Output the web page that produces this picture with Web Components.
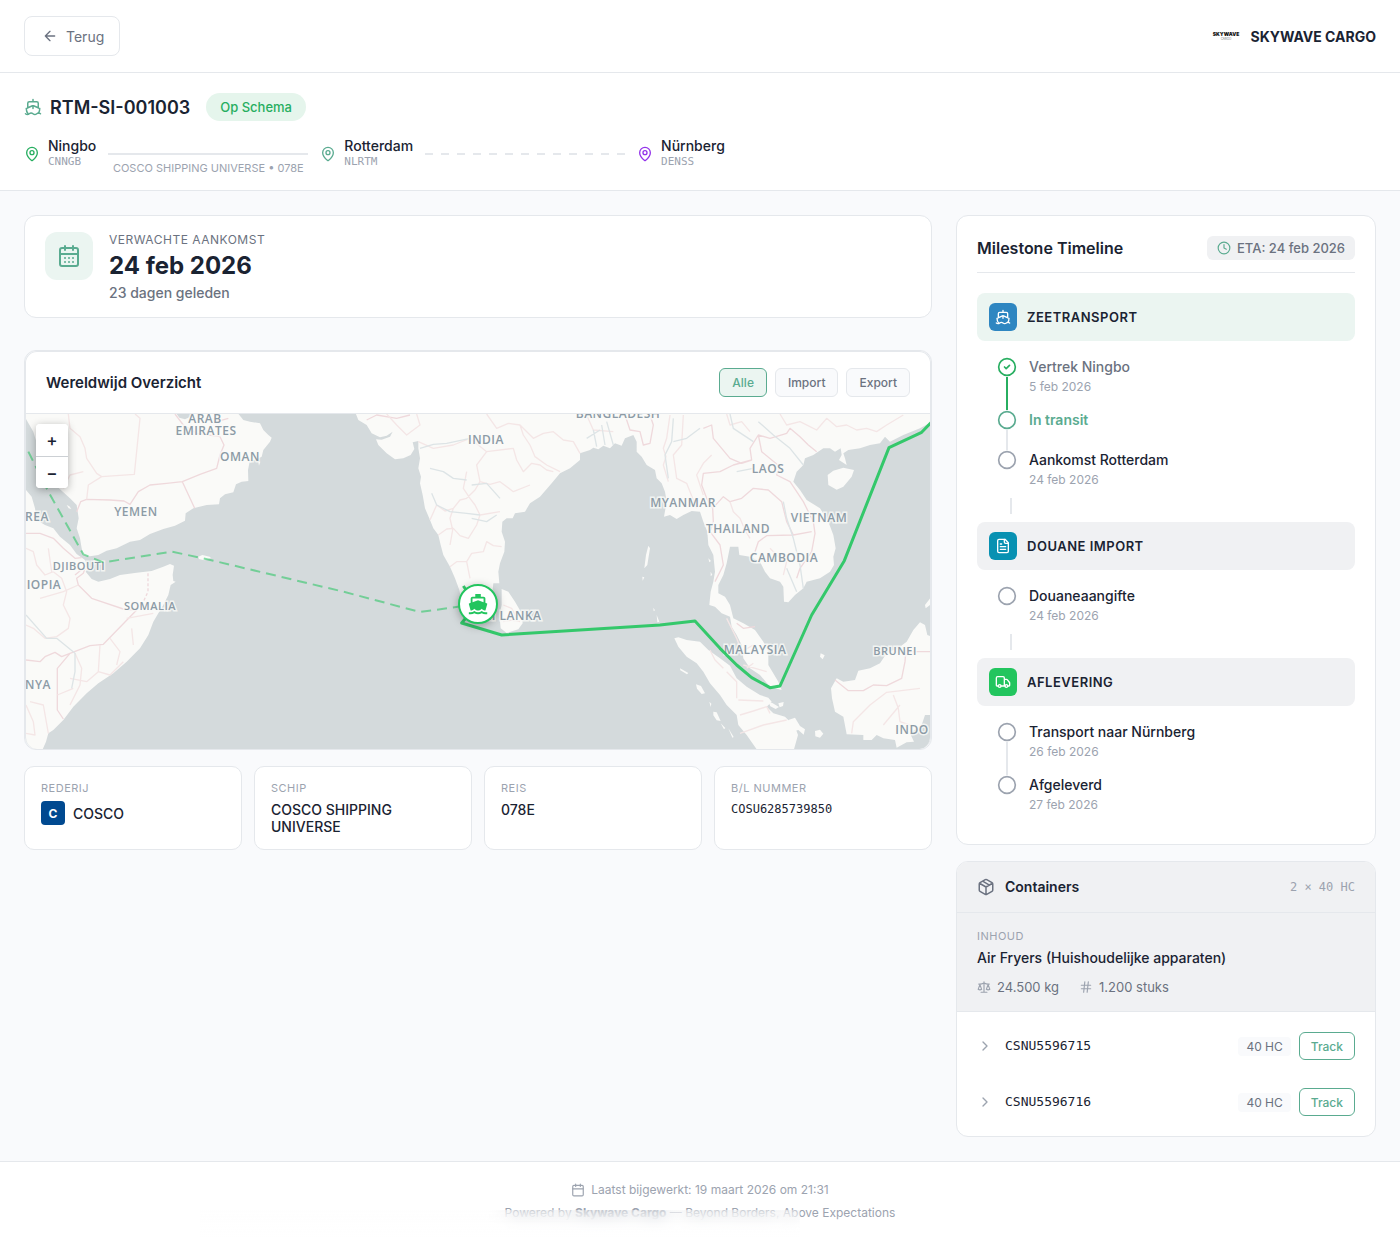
<!DOCTYPE html>
<html lang="nl">
<head>
<meta charset="utf-8">
<meta name="viewport" content="width=device-width, initial-scale=1">
<title>RTM-SI-001003</title>
<style>
:root {
  --ink: #1a2332; --muted: #6b7280; --faint: #9ca3af; --line: #e5e8ec;
  --brand: #5aab90; --tint: #ebf5f1; --ok: #27ae60; --page: #f9fafc; --soft: #f0f1f3;
  --mono: "DejaVu Sans Mono", monospace;
}
body { margin: 0; background: var(--page); color: var(--ink); font: 14px/17px Inter, sans-serif; }
</style>
</head>
<body>
<tracking-page></tracking-page>
<script>
const define = (name, html, extra = {}) => {
  const tpl = document.createElement('template');
  tpl.innerHTML = html;
  customElements.define(name, class extends HTMLElement {
    connectedCallback() {
      if (this.shadowRoot) return;
      this.attachShadow({ mode: 'open' }).append(tpl.content.cloneNode(true));
      if (extra.ready) extra.ready(this, this.shadowRoot);
    }
  });
};

/* Icon set on a 24px grid */
const ICONS = {
  back: '<path d="m12 19-7-7 7-7M19 12H5"/>',
  ship: '<path d="M12 10.189V14M12 2v3M19 13V7a2 2 0 0 0-2-2H7a2 2 0 0 0-2 2v6M19.38 20A11.6 11.6 0 0 0 21 14l-8.188-3.639a2 2 0 0 0-1.624 0L3 14a11.6 11.6 0 0 0 2.81 7.76"/><path d="M2 21c.6.5 1.2 1 2.5 1 2.5 0 2.5-2 5-2 1.3 0 1.9.5 2.5 1s1.2 1 2.5 1c2.5 0 2.5-2 5-2 1.3 0 1.9.5 2.5 1"/>',
  pin: '<path d="M20 10c0 4.993-5.539 10.193-7.399 11.799a1 1 0 0 1-1.202 0C9.539 20.193 4 14.993 4 10a8 8 0 0 1 16 0"/><circle cx="12" cy="10" r="3"/>',
  days: '<path d="M8 2v4M16 2v4M3 10h18M8 14h.01M12 14h.01M16 14h.01M8 18h.01M12 18h.01M16 18h.01"/><rect x="3" y="4" width="18" height="18" rx="2"/>',
  calendar: '<path d="M8 2v4M16 2v4M3 10h18"/><rect x="3" y="4" width="18" height="18" rx="2"/>',
  clock: '<circle cx="12" cy="12" r="10"/><path d="M12 6v6l4 2"/>',
  file: '<path d="M15 2H6a2 2 0 0 0-2 2v16a2 2 0 0 0 2 2h12a2 2 0 0 0 2-2V7Z"/><path d="M14 2v4a2 2 0 0 0 2 2h4M10 9H8M16 13H8M16 17H8"/>',
  truck: '<path d="M14 18V6a2 2 0 0 0-2-2H4a2 2 0 0 0-2 2v11a1 1 0 0 0 1 1h2M15 18H9M19 18h2a1 1 0 0 0 1-1v-3.65a1 1 0 0 0-.22-.624l-3.48-4.35A1 1 0 0 0 17.52 8H14"/><circle cx="17" cy="18" r="2"/><circle cx="7" cy="18" r="2"/>',
  box: '<path d="M11 21.73a2 2 0 0 0 2 0l7-4A2 2 0 0 0 21 16V8a2 2 0 0 0-1-1.73l-7-4a2 2 0 0 0-2 0l-7 4A2 2 0 0 0 3 8v8a2 2 0 0 0 1 1.73zM12 22V12M3.29 7 12 12l8.71-5M7.5 4.27l9 5.15"/>',
  scale: '<path d="m16 16 3-8 3 8c-.87.65-1.92 1-3 1s-2.13-.35-3-1ZM2 16l3-8 3 8c-.87.65-1.92 1-3 1s-2.13-.35-3-1ZM7 21h10M12 3v18M3 7h2c2 0 5-1 7-2 2 1 5 2 7 2h2"/>',
  hash: '<path d="M4 9h16M4 15h16M10 3 8 21M16 3l-2 18"/>',
  chevron: '<path d="m9 18 6-6-6-6"/>',
  circle: '<circle cx="12" cy="12" r="10"/>',
  done: '<circle cx="12" cy="12" r="10"/><path d="m9 12 2 2 4-4"/>'
};
define('ui-icon', `<style>
  :host { display: inline-flex; flex: none; width: var(--size, 16px); height: var(--size, 16px); }
  svg { width: 100%; height: 100%; fill: none; stroke: currentColor; stroke-width: 2; stroke-linecap: round; stroke-linejoin: round; }
</style><svg viewBox="0 0 24 24" aria-hidden="true"></svg>`, {
  ready: (el, root) => { root.querySelector('svg').innerHTML = ICONS[el.getAttribute('name')] || ''; }
});

define('brand-bar', `<style>
  :host { display: flex; justify-content: space-between; align-items: center; padding: 16px 24px; background: #fff; border-bottom: 1px solid var(--line); }
  button { display: flex; align-items: center; gap: 8px; height: 40px; padding: 0 15px 0 17px; border: 1px solid var(--line); border-radius: 8px; background: #fff; color: var(--muted); font: 400 14px/17px Inter, sans-serif; }
  div { display: flex; align-items: center; gap: 8px; font-weight: 700; }
  svg { width: 32px; height: 32px; }
</style>
<button type="button"><ui-icon name="back"></ui-icon>Terug</button>
<div><svg viewBox="0 0 32 32" font-family="Inter, sans-serif" text-anchor="middle">
  <text x="16" y="16" font-size="5" font-weight="900" fill="#111">SKYWAVE</text>
  <text x="16" y="20" font-size="3" font-weight="400" fill="#777">CARGO</text></svg><span>SKYWAVE CARGO</span></div>`);

define('route-stop', `<style>
  :host { display: flex; align-items: center; gap: 8px; font-weight: 500; }
  small { display: block; font: 11px/16px var(--mono); color: var(--faint); }
  div { color: var(--ink); }
</style><ui-icon name="pin"></ui-icon><div><slot></slot><small><slot name="code"></slot></small></div>`);

define('route-leg', `<style>
  :host { display: block; position: relative; width: 200px; height: 2px; background: var(--line); }
  :host([planned]) { background: repeating-linear-gradient(90deg, var(--line) 0 8px, transparent 8px 16px); }
  span { position: absolute; top: 8px; left: 0; width: 100%; text-align: center; white-space: nowrap; font-size: 11px; line-height: 14px; color: var(--faint); }
</style><span><slot></slot></span>`);

define('shipment-head', `<style>
  :host { display: flex; flex-direction: column; gap: 16px; padding: 20px 24px; background: #fff; border-bottom: 1px solid var(--line); }
  .top { display: flex; align-items: center; gap: 16px; }
  h1 { display: flex; align-items: center; gap: 8px; margin: 0; font-size: 18px; line-height: 23px; font-weight: 600; }
  h1 ui-icon { --size: 18px; color: var(--brand); }
  .pill { padding: 6px 14px; border-radius: 14px; background: #e5f5ec; color: var(--ok); font-size: 13px; line-height: 16px; font-weight: 500; }
  .route { display: flex; align-items: center; gap: 12px; }
</style>
<div class="top"><h1><ui-icon name="ship"></ui-icon>RTM-SI-001003</h1><span class="pill">Op Schema</span></div>
<div class="route">
  <route-stop style="color:var(--ok)">Ningbo<span slot="code">CNNGB</span></route-stop>
  <route-leg>COSCO SHIPPING UNIVERSE • 078E</route-leg>
  <route-stop style="color:var(--brand)">Rotterdam<span slot="code">NLRTM</span></route-stop>
  <route-leg planned></route-leg>
  <route-stop style="color:#9333ea">Nürnberg<span slot="code">DENSS</span></route-stop>
</div>`);

define('eta-card', `<style>
  :host { display: flex; align-items: flex-start; gap: 16px; padding: 16px 20px; background: #fff; border: 1px solid var(--line); border-radius: 12px; }
  .badge { display: flex; align-items: center; justify-content: center; width: 48px; height: 48px; border-radius: 12px; background: var(--tint); color: var(--brand); --size: 24px; }
  small { display: block; font-size: 12px; line-height: 16px; letter-spacing: 0.5px; color: var(--muted); }
  b { display: block; margin: 3px 0; font-size: 24px; line-height: 30px; font-weight: 700; }
  p { margin: 0; font-weight: 500; color: var(--muted); }
</style>
<span class="badge"><ui-icon name="days"></ui-icon></span>
<div><small>VERWACHTE AANKOMST</small><b>24 feb 2026</b><p>23 dagen geleden</p></div>`);

define('world-map', `<style>
  :host { display: block; position: relative; height: 335px; background: #d4dadc; overflow: hidden; }
  svg { display: block; width: 100%; height: 100%; }
  .land path { fill: #fafaf8; }
  .border path { fill: none; stroke: #efd9dc; stroke-width: 4; stroke-linejoin: round; }
  .minor path { fill: none; stroke: #f4e6e6; stroke-width: 4; stroke-linejoin: round; }
  .river path { fill: none; stroke: #dde4e6; stroke-width: 4; stroke-linejoin: round; }
  text { font: 600 12px "Open Sans", sans-serif; letter-spacing: 0.5px; fill: #8c9ba6; stroke: #fafaf8; stroke-width: 3; stroke-opacity: .8; paint-order: stroke; text-anchor: middle; }
  text.s { font-size: 11px; }
  .zoom { position: absolute; left: 10px; top: 10px; display: grid; border-radius: 4px; background: #fff; box-shadow: 0 2px 8px rgba(0,0,0,.3); overflow: hidden; }
  .zoom button { width: 32px; height: 32px; padding: 0; border: 0; background: #fff; color: var(--ink); font: 500 17px/32px Inter, sans-serif; }
  .zoom button + button { border-top: 1px solid #ccd0d4; }
</style>
<svg viewBox="26 414 904 335" preserveAspectRatio="xMidYMid slice">
<g transform="translate(20 405) scale(.333333)">
<g class="land">
<path d="M0 235L18 255 35 275 45 310 50 345 75 360 100 370 120 395 150 420 170 447 195 465 205 490 197 500 215 522 235 530 270 522 300 510 350 503 395 498 430 485 450 477 462 482 458 510 460 528 467 530 452 540 445 570 430 600 415 625 400 650 385 690 360 730 320 770 280 805 235 835 200 865 160 905 130 945 100 975 85 985 78 1010 65 1040 0 1040Z"/>
<path d="M0 15L18 42 40 80 55 130 80 190 100 235 130 262 150 280 170 300 176 340 170 370 180 400 185 430 190 450 210 454 235 450 260 437 290 430 330 410 360 405 390 387 430 372 465 362 495 347 497 325 520 310 560 300 597 298 600 280 615 268 640 262 648 238 665 230 685 228 684 195 690 165 705 165 725 155 730 135 750 110 755 98 745 90 730 75 720 55 690 50 670 45 650 20 520 20 510 36 495 43 478 38 465 20 0 20Z"/>
<path d="M140 300l8 4 6 8-8-2zM535 455l12-5 22 5 4 4-20 7-16-4zM715 172l6-2-4 12z"/>
<path d="M1005 20L1015 45 1040 60 1055 85 1080 97 1100 92 1118 80 1110 95 1085 104 1068 103 1075 120 1100 145 1125 163 1150 160 1172 150 1183 132 1178 112 1195 108 1195 130 1200 160 1195 190 1203 215 1200 235 1208 270 1215 310 1230 345 1240 370 1255 390 1262 420 1270 450 1290 485 1305 520 1318 555 1325 590 1345 630 1375 625 1390 600 1400 575 1418 555 1420 535 1438 535 1435 500 1440 475 1453 440 1455 410 1445 380 1447 350 1460 340 1478 340 1485 325 1515 320 1530 295 1560 275 1595 235 1620 205 1650 190 1680 165 1680 145 1710 135 1720 128 1735 133 1750 122 1770 130 1785 115 1805 122 1815 100 1840 90 1850 110 1850 140 1865 155 1880 180 1905 195 1910 220 1925 235 1935 260 1940 290 1932 335 1950 330 1970 342 1990 330 2015 318 2040 320 2050 350 2062 380 2065 420 2080 450 2085 500 2080 530 2072 560 2068 600 2085 605 2105 625 2130 635 2135 665 2150 690 2165 720 2170 760 2190 790 2220 810 2250 845 2285 855 2275 830 2245 780 2245 740 2230 710 2205 675 2170 655 2140 640 2130 600 2115 575 2095 565 2095 540 2110 510 2120 475 2130 425 2155 425 2158 450 2190 455 2220 470 2235 500 2250 520 2280 530 2290 545 2292 590 2305 592 2325 570 2350 550 2360 530 2400 520 2430 500 2442 480 2440 455 2447 430 2440 390 2425 350 2400 310 2360 285 2340 255 2320 230 2330 200 2350 180 2355 160 2380 150 2410 130 2430 130 2445 140 2462 130 2465 150 2457 165 2480 180 2475 160 2470 145 2485 135 2520 130 2550 120 2580 115 2595 95 2610 110 2650 90 2700 70 2745 45 2745 20Z"/>
</g>
<g class="border">
<path d="M465 27L490 60 530 85 600 95 612 120 600 150 590 190 540 208 487 230 440 235 390 240 355 260 330 298 312 288 270 285 200 283 182 290 170 320M487 230L524 310M18 385L60 385 100 400 130 430 165 460 185 458M165 510L190 490M350 615L250 718 210 722 150 745 112 790 112 915 130 942M350 615L310 612 215 580 175 540 170 520 190 505 195 490M18 765L60 770 75 755 105 742 125 755 150 745M1040 45L1070 30 1130 40 1170 30M590 50L625 40"/>
<path stroke-dasharray="9 6" d="M384 505V560L370 590"/>
<path d="M1815 30L1830 75 1860 80 1870 120 1890 115 1900 60 1890 30M2050 70L2075 60 2080 100 2105 130 2130 160 2165 175 2195 165 2190 130 2215 90 2250 100 2300 85 2310 70 2340 95 2365 120 2390 140M2195 165L2140 180 2100 200 2050 205 2045 240 2060 280 2078 310 2080 350 2070 380 2100 420 2110 480 2085 530M2078 310L2110 275 2130 290 2165 280 2200 250 2245 255 2285 290 2300 350 2320 390 2375 380M2215 90L2225 140 2280 185 2270 210 2310 230 2350 290 2380 350 2385 385 2375 440 2340 490 2330 520M2205 440L2215 410 2240 392 2320 390M2150 655L2170 670 2205 665"/>
</g>
<g class="minor">
<path d="M145 27L150 70 180 95 195 130 200 160 230 205 245 215 343 208 360 40 345 27M245 215L205 240 200 283M130 250L150 210 190 200M18 430L40 440 50 480 75 510 100 500 125 520 140 560 130 600 150 640 145 670 110 695 75 700 40 670 18 660M60 580L130 560 175 540M85 430L95 500M165 745L185 790 180 840 150 900M240 720L235 800 200 830 150 820M235 800L270 810 310 770M270 700L300 740 290 780M335 670L340 720M30 890L70 900 85 985M18 900L40 950 45 990 18 985M320 640L400 625M112 870L160 850"/>
<path d="M1100 27L1130 60 1160 90 1200 60 1190 27M1195 110L1240 130 1300 120 1350 100 1400 140 1480 130 1490 165 1510 200 1535 175 1560 180 1580 195 1600 200M1230 345L1250 300 1275 318 1300 310 1320 285 1340 280 1365 255 1380 230 1410 238 1440 230 1480 260 1530 240M1255 390L1280 372 1300 370 1320 392 1345 400 1370 360 1380 330 1365 300 1350 280 1330 250 1340 200M1400 27L1430 70 1465 55 1500 60 1540 100 1570 85 1600 80 1630 105 1660 110 1680 145M1500 60L1510 90 1530 120 1545 155 1580 180 1620 200M1380 330L1440 320M1290 485L1310 470 1340 470 1355 445 1390 440 1400 410 1420 422 1445 425M1350 520L1340 470M1300 310L1290 340 1298 375 1290 420M1380 230L1370 180 1400 140M1700 30L1720 75 1780 80M1950 30L1940 100 1930 130 1938 155 1930 180 1945 230M1990 30L1985 120 1960 150 1970 220 2000 235 2010 260 2030 310M2075 150L2050 175 2030 210 2050 270M2130 290L2140 320 2160 340 2175 375 2190 400M2120 27L2130 60 2165 50 2190 80M2280 27L2300 60 2340 50 2390 75 2420 40 2450 65 2480 60 2510 75 2540 70 2570 80 2600 60 2650 30M2250 430L2275 455 2300 470 2290 510M2120 640L2150 700 2165 740M2165 740L2200 720M2170 780L2240 800M2180 790L2200 775M2120 830L2160 840 2155 880"/>
</g>
<g class="river">
<path d="M18 630L80 700 110 700 165 745 165 800 155 850M1200 130L1240 118 1280 115 1350 100M1230 190L1270 200 1300 220 1340 225M1235 265L1250 300 1290 320 1340 325 1380 330M1700 100L1740 75M1720 75L1730 125M1745 60L1755 120M1760 50L1780 120M1960 40L1955 110 1935 150 1945 220M2130 27L2140 70 2200 110M2215 50L2260 90 2310 130 2350 180M2290 290L2300 340 2320 400 2340 480 2350 550M2300 490L2330 560M2150 200L2200 190M2040 70L2000 100 1960 110M1355 340L1400 350 1430 330M1355 240L1400 235 1440 280"/>
</g>
<g class="land" transform="translate(1350)">
<path d="M95 552L115 560 135 590 155 625 158 655 145 673 110 684 92 670 88 630 95 600ZM1073 210L1090 197 1120 188 1152 195 1145 215 1120 245 1100 254 1075 240Z"/>
<path d="M613 700L625 697 650 705 690 710 715 735 750 760 780 782 800 820 830 845 870 870 895 878 905 890 890 905 910 925 945 935 975 965 984 990 970 1040 865 1040 830 990 805 960 800 930 770 900 750 870 720 835 700 800 680 775 650 755 625 725Z"/>
<path d="M1083 850L1100 820 1120 830 1155 825 1165 797 1200 790 1230 775 1250 745 1290 725 1310 710 1330 675 1350 652 1365 660 1372 690 1400 700V930L1365 930 1355 960 1320 985 1332 1010 1310 1012 1280 1028 1275 1005 1240 1000 1220 990 1205 1005 1180 1005 1180 990 1130 988 1120 935 1095 920 1086 880Z"/>
<path d="M535 422l5 8-8 50-9 10 5-40zM517 515l6 2-5 10zM550 608l5 8-4 3zM560 630l8 20-6 2zM630 790l25 14-4 4-20-12zM678 838l15 5 12 22-10 2-14-16zM730 920l10 2 12 26-12-2-10-15zM718 890l6 6-2 10zM752 955l14 14-4 4zM775 970l16 26-4 2zM955 945l20-7 15 25 15 10-4 16-16-14-14 4-18-12zM1035 978l15-4 10 12-10 12-14-4zM1052 745l12 6-6 12-8-8zM925 895l16-4-2 12-10 4zM1365 600l20-26v22l-18 14zM895 890l12 4 20 12-10 6-16-8zM715 460l8 8-5 4zM722 500l5 10-5 3z"/>
</g>
<g class="minor"><path d="M1450 600L1475 610 1490 640M1450 650L1475 645 1500 650M2070 735L2085 765 2110 790M2150 880L2150 830 2120 800M2155 885L2230 888M2160 930L2200 918 2240 905 2250 925M2160 985L2230 960 2300 945M2495 985L2500 950 2550 900 2600 862 2700 850M2620 870L2635 910 2640 950 2700 970M2590 960L2640 900"/></g>
<g class="border"><path d="M2445 825L2485 857 2530 857 2560 840 2600 842 2645 820 2655 770 2658 735M2660 740H2730"/></g>
</g>
<g>
<text x="205" y="423">ARAB</text><text x="206" y="435">EMIRATES</text><text x="240" y="461">OMAN</text>
<text x="136" y="516">YEMEN</text><text x="37" y="521">REA</text><text class="s" x="79" y="570">DJIBOUTI</text>
<text x="44" y="589">IOPIA</text><text class="s" x="150" y="610">SOMALIA</text><text x="38" y="689">NYA</text>
<text x="486" y="444">INDIA</text><text x="618" y="418">BANGLADESH</text><text x="768" y="473">LAOS</text>
<text x="683" y="507">MYANMAR</text><text x="819" y="522">VIETNAM</text><text x="738" y="533">THAILAND</text>
<text x="784" y="562">CAMBODIA</text><text x="509" y="620">SRI LANKA</text><text x="755" y="654">MALAYSIA</text>
<text class="s" x="895" y="655">BRUNEI</text><text x="912" y="734">INDO</text>
</g>
<g transform="translate(20 405) scale(.333333)" fill="none" stroke="#22c55e" stroke-linejoin="round">
<path d="M25 140L85 260 190 448 250 472 455 440 550 460 970 560 1200 621 1330 603" stroke-width="6" stroke-opacity=".55" stroke-dasharray="30 18"/>
<path d="M1330 543L1370 600 1325 654 1445 690 1920 660 2025 648 2100 730 2150 780 2195 818 2250 848 2280 843 2375 630 2473 467 2607 128 2705 82 2745 40" stroke-width="9" stroke-opacity=".9"/>
</g>
<g style="filter: drop-shadow(0 2px 4px rgba(0,0,0,.3))"><circle cx="478" cy="604" r="19" fill="#fff" stroke="#22c55e" stroke-width="2"/></g>
<path transform="translate(467 593) scale(.92)" fill="#22c55e" fill-rule="evenodd" d="M6 6H18V9.960L12 8 6 9.960ZM3.940 19H4C5.600 19 7 18.120 8 17C9 18.120 10.400 19 12 19C13.600 19 15 18.120 16 17C17 18.120 18.400 19 20 19H20.050L21.950 12.310C22.030 12.060 22 11.780 21.890 11.540C21.760 11.300 21.550 11.120 21.290 11.040L20 10.620V6C20 4.890 19.100 4 18 4H15V1H9V4H6A2 2 0 0 0 4 6V10.620L2.710 11.040C2.450 11.120 2.240 11.300 2.110 11.540C2 11.780 1.970 12.060 2.050 12.310ZM20 21C18.610 21 17.220 20.530 16 19.670C13.560 21.380 10.440 21.380 8 19.670C6.780 20.530 5.390 21 4 21H2V23H4C5.370 23 6.740 22.650 8 22C10.500 23.300 13.500 23.300 16 22C17.260 22.650 18.620 23 20 23H22V21Z"/>
</svg>
<div class="zoom"><button type="button" aria-label="Inzoomen">+</button><button type="button" aria-label="Uitzoomen">−</button></div>`);

define('map-card', `<style>
  :host { display: block; border: 1px solid var(--line); border-radius: 12px; overflow: hidden; }
  section { border: solid var(--line); border-width: 1px 1px 0; border-radius: 12px; overflow: hidden; background: #fff; }
  header { display: flex; justify-content: space-between; align-items: center; padding: 16px 20px; border-bottom: 1px solid var(--line); }
  h2 { margin: 0; font-size: 15px; line-height: 18px; font-weight: 600; }
  nav { display: flex; gap: 8px; }
  nav button { padding: 6px 12px; border: 1px solid var(--line); border-radius: 6px; background: var(--page); color: var(--muted); font: 500 12px/15px Inter, sans-serif; }
  nav .on { border-color: var(--brand); background: var(--tint); color: var(--brand); }
</style>
<section><header><h2>Wereldwijd Overzicht</h2><nav><button type="button" class="on">Alle</button><button type="button">Import</button><button type="button">Export</button></nav></header>
<world-map></world-map></section>`);

define('info-card', `<style>
  :host { display: flex; flex-direction: column; gap: 6px; padding: 15px 16px 14px; background: #fff; border: 1px solid var(--line); border-radius: 10px; }
  small { font-size: 11px; line-height: 13px; letter-spacing: 0.5px; color: var(--faint); }
  .v { display: flex; align-items: center; gap: 8px; font-weight: 500; }
</style><small><slot name="label"></slot></small><div class="v"><slot></slot></div>`);

define('phase-head', `<style>
  :host { display: flex; align-items: center; gap: 10px; padding: 10px 12px; border-radius: 8px; background: var(--soft); font-size: 13px; line-height: 16px; font-weight: 600; letter-spacing: 0.5px; }
  :host([active]) { background: var(--tint); }
  span { display: flex; align-items: center; justify-content: center; width: 28px; height: 28px; border-radius: 6px; background: var(--fill); color: #fff; }
</style><span><slot name="icon"></slot></span><slot></slot>`);

define('mile-stone', `<style>
  :host { display: flex; gap: 12px; padding-left: 20px; min-height: 40px; font-weight: 500; color: var(--ink); --dot: var(--faint); --rail: var(--line); }
  :host([state=done]) { color: var(--muted); --dot: var(--ok); --rail: var(--ok); }
  :host([state=now]) { color: var(--brand); font-weight: 600; --dot: var(--brand); }
  .mark { display: flex; flex-direction: column; align-items: center; --size: 20px; color: var(--dot); }
  .mark i { flex: 1; width: 2px; background: var(--rail); }
  :host([last]) i { display: none; }
  .t { line-height: 20px; padding-bottom: 15px; }
  :host([last]) .t { padding-bottom: 0; }
  ::slotted(small) { display: block; margin-top: 2px; font-size: 12px; line-height: 16px; font-weight: 400; color: var(--faint); }
</style><div class="mark"><i></i></div><div class="t"><slot></slot></div>`, {
  ready: (el, root) => {
    const icon = document.createElement('ui-icon');
    icon.setAttribute('name', el.getAttribute('state') === 'done' ? 'done' : 'circle');
    root.querySelector('.mark').prepend(icon);
  }
});

define('milestone-timeline', `<style>
  :host { display: block; padding: 20px 20px 21px; background: #fff; border: 1px solid var(--line); border-radius: 12px; }
  header { display: flex; justify-content: space-between; align-items: center; padding-bottom: 12px; margin-bottom: 20px; border-bottom: 1px solid var(--line); }
  h2 { margin: 0; font-size: 16px; line-height: 20px; font-weight: 600; }
  .eta { display: flex; align-items: center; gap: 6px; padding: 4px 10px; border-radius: 6px; background: var(--soft); color: var(--muted); font-size: 13px; line-height: 16px; font-weight: 500; }
  .eta ui-icon { --size: 14px; color: var(--brand); }
  .list { padding: 16px 0 8px; }
  hr { width: 2px; height: 16px; margin: 0 0 8px 33px; border: 0; background: var(--line); }
</style>
<header><h2>Milestone Timeline</h2><span class="eta"><ui-icon name="clock"></ui-icon>ETA: 24 feb 2026</span></header>
<phase-head active style="--fill:#2e86c1"><ui-icon slot="icon" name="ship"></ui-icon>ZEETRANSPORT</phase-head>
<div class="list">
<mile-stone state="done">Vertrek Ningbo<small>5 feb 2026</small></mile-stone>
<mile-stone state="now">In transit</mile-stone>
<mile-stone last>Aankomst Rotterdam<small>24 feb 2026</small></mile-stone></div><hr>
<phase-head style="--fill:#0891b2"><ui-icon slot="icon" name="file"></ui-icon>DOUANE IMPORT</phase-head>
<div class="list"><mile-stone last>Douaneaangifte<small>24 feb 2026</small></mile-stone></div><hr>
<phase-head style="--fill:#22c55e"><ui-icon slot="icon" name="truck"></ui-icon>AFLEVERING</phase-head>
<div class="list"><mile-stone>Transport naar Nürnberg<small>26 feb 2026</small></mile-stone>
<mile-stone last>Afgeleverd<small>27 feb 2026</small></mile-stone></div>`);

define('container-row', `<style>
  :host { display: flex; align-items: center; gap: 8px; padding: 14px 20px; }
  .open { display: flex; align-items: center; gap: 12px; margin-right: auto; padding: 0; border: 0; background: none; color: var(--ink); font: 13px/16px var(--mono); }
  ui-icon { color: var(--faint); }
  .size { padding: 2px 8px; border-radius: 4px; background: var(--page); color: var(--muted); font-size: 12px; line-height: 15px; }
  .track { height: 28px; padding: 0 11px; border: 1px solid var(--brand); border-radius: 6px; background: #fff; color: var(--brand); font: 500 12px/15px Inter, sans-serif; }
</style><button type="button" class="open"><ui-icon name="chevron"></ui-icon><slot></slot></button><span class="size">40 HC</span><button type="button" class="track">Track</button>`);

define('container-card', `<style>
  :host { display: block; background: #fff; border: 1px solid var(--line); border-radius: 12px; overflow: hidden; }
  header { display: flex; align-items: center; gap: 10px; padding: 16px 20px; background: var(--soft); border-bottom: 1px solid var(--line); }
  header ui-icon { --size: 18px; color: var(--muted); }
  h2 { flex: 1; margin: 0; font-size: 14px; line-height: 18px; font-weight: 600; }
  header span { font: 12px/16px var(--mono); color: var(--faint); }
  .goods { padding: 16px 20px; background: var(--soft); border-bottom: 1px solid var(--line); }
  small { display: block; font-size: 11px; line-height: 14px; letter-spacing: 0.5px; color: var(--faint); }
  b { display: block; margin: 6px 0 12px; line-height: 18px; font-weight: 500; }
  .facts { display: flex; gap: 20px; font-size: 13px; line-height: 16px; color: var(--muted); }
  .facts span { display: flex; align-items: center; gap: 6px; }
  .facts ui-icon { --size: 14px; color: var(--faint); }
  .rows { padding: 6px 0; }
</style>
<header><ui-icon name="box"></ui-icon><h2>Containers</h2><span>2 × 40 HC</span></header>
<div class="goods"><small>INHOUD</small><b>Air Fryers (Huishoudelijke apparaten)</b>
<div class="facts"><span><ui-icon name="scale"></ui-icon>24.500 kg</span><span><ui-icon name="hash"></ui-icon>1.200 stuks</span></div></div>
<div class="rows"><container-row>CSNU5596715</container-row><container-row>CSNU5596716</container-row></div>`);

define('page-foot', `<style>
  :host { display: flex; flex-direction: column; align-items: center; gap: 7px; flex: 1; position: relative; padding: 20px 24px; background: #fff; border-top: 1px solid var(--line); font-size: 12px; line-height: 16px; color: var(--faint); }
  .row { display: flex; align-items: center; gap: 6px; }
  .row ui-icon { --size: 14px; }
  b { font-weight: 700; }
  .veil { position: absolute; top: 48px; left: calc(50% - 500px); width: 600px; height: 30px; background: linear-gradient(rgba(250,250,250,.15), rgba(255,255,255,.9)); backdrop-filter: blur(8px); }
</style>
<div class="row"><ui-icon name="calendar"></ui-icon>Laatst bijgewerkt: 19 maart 2026 om 21:31</div>
<div>Powered by <b>Skywave Cargo</b> — Beyond Borders, Above Expectations</div>
<div class="veil"></div>`);

define('tracking-page', `<style>
  :host { display: flex; flex-direction: column; min-height: 100vh; }
  main { display: grid; grid-template-columns: minmax(0, 1fr) 420px; gap: 24px; padding: 24px; align-items: start; }
  .left { display: grid; gap: 16px; }
  .side { display: grid; gap: 16px; }
  map-card { margin-top: 16px; }
  .facts { display: grid; grid-template-columns: repeat(4, minmax(0, 1fr)); gap: 12px; }
  .logo { display: flex; align-items: center; justify-content: center; width: 24px; height: 24px; border-radius: 4px; background: #004990; color: #fff; font-size: 12px; font-weight: 700; }
  code { font: 12px/17px var(--mono); }
</style>
<brand-bar></brand-bar><shipment-head></shipment-head>
<main><div class="left"><eta-card></eta-card><map-card></map-card>
<div class="facts">
<info-card><span slot="label">REDERIJ</span><span class="logo">C</span>COSCO</info-card>
<info-card><span slot="label">SCHIP</span>COSCO SHIPPING UNIVERSE</info-card>
<info-card><span slot="label">REIS</span>078E</info-card>
<info-card><span slot="label">B/L NUMMER</span><code>COSU6285739850</code></info-card>
</div></div>
<div class="side"><milestone-timeline></milestone-timeline><container-card></container-card></div></main>
<page-foot></page-foot>`);
</script>
</body>
</html>
